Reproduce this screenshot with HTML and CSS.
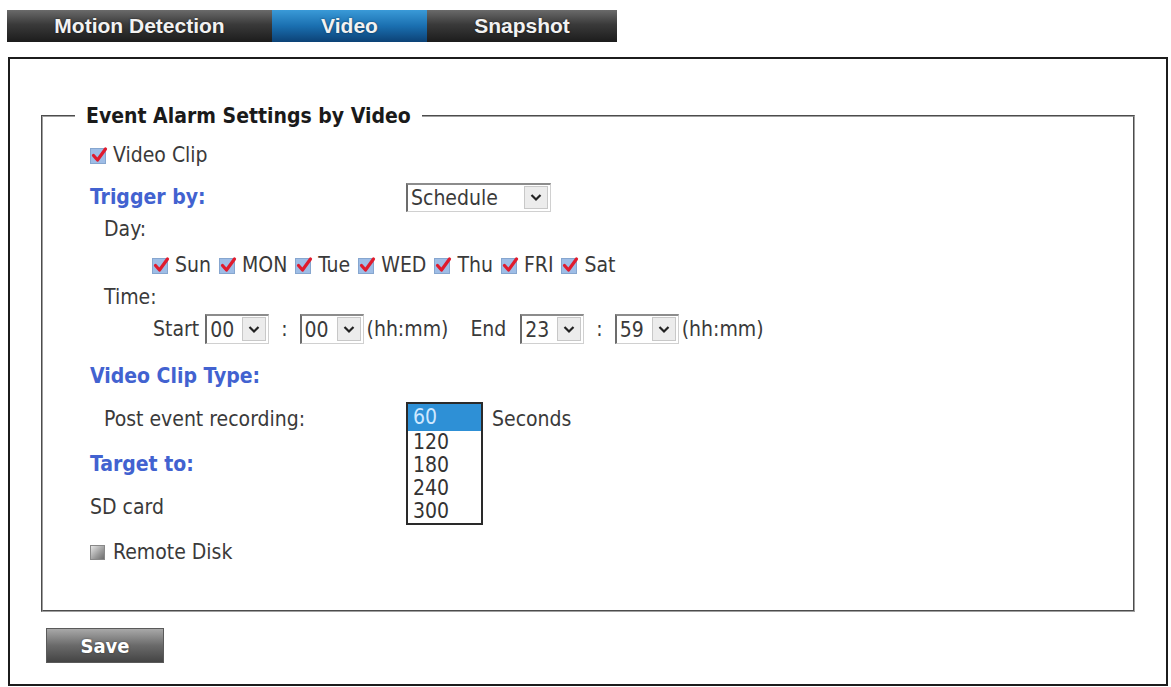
FILE: index.html
```html
<!DOCTYPE html>
<html>
<head>
    <meta charset="UTF-8">
    <title>Event Alarm Settings by Video</title>
    <link rel="stylesheet" href="styles.css">
</head>
<body>
    <nav class="tabs">
        <a href="#motion" class="tab">Motion Detection</a>
        <a href="#video" class="tab active">Video</a>
        <a href="#snapshot" class="tab">Snapshot</a>
    </nav>

    <div class="panel">
        <fieldset class="settings">
            <legend>Event Alarm Settings by Video</legend>
            <div class="rows">
                <div class="row">
                    <label class="check">
                        <svg class="cb" viewBox="0 0 18 18"><rect x="0.5" y="2.5" width="15" height="15" fill="#9ebde6" stroke="#86a6cf"/><path d="M3.5 9.5 L7.5 14 L15.5 3" fill="none" stroke="#e01b2d" stroke-width="3.2" stroke-linecap="round" stroke-linejoin="round"/></svg>
                        Video Clip
                    </label>
                </div>

                <div class="row gap-l">
                    <span class="label head">Trigger by:</span>
                    <div class="select wide">
                        <span class="value">Schedule</span>
                        <span class="btn"><svg viewBox="0 0 14 10"><path d="M2.5 3 L7 7.5 L11.5 3" fill="none" stroke="#222" stroke-width="2.2"/></svg></span>
                    </div>
                </div>

                <div class="row gap-xs sub">Day:</div>

                <div class="row gap-s days">
                    <label class="check"><svg class="cb" viewBox="0 0 18 18"><rect x="0.5" y="2.5" width="15" height="15" fill="#9ebde6" stroke="#86a6cf"/><path d="M3.5 9.5 L7.5 14 L15.5 3" fill="none" stroke="#e01b2d" stroke-width="3.2" stroke-linecap="round" stroke-linejoin="round"/></svg>Sun</label>
                    <label class="check"><svg class="cb" viewBox="0 0 18 18"><rect x="0.5" y="2.5" width="15" height="15" fill="#9ebde6" stroke="#86a6cf"/><path d="M3.5 9.5 L7.5 14 L15.5 3" fill="none" stroke="#e01b2d" stroke-width="3.2" stroke-linecap="round" stroke-linejoin="round"/></svg>MON</label>
                    <label class="check"><svg class="cb" viewBox="0 0 18 18"><rect x="0.5" y="2.5" width="15" height="15" fill="#9ebde6" stroke="#86a6cf"/><path d="M3.5 9.5 L7.5 14 L15.5 3" fill="none" stroke="#e01b2d" stroke-width="3.2" stroke-linecap="round" stroke-linejoin="round"/></svg>Tue</label>
                    <label class="check"><svg class="cb" viewBox="0 0 18 18"><rect x="0.5" y="2.5" width="15" height="15" fill="#9ebde6" stroke="#86a6cf"/><path d="M3.5 9.5 L7.5 14 L15.5 3" fill="none" stroke="#e01b2d" stroke-width="3.2" stroke-linecap="round" stroke-linejoin="round"/></svg>WED</label>
                    <label class="check"><svg class="cb" viewBox="0 0 18 18"><rect x="0.5" y="2.5" width="15" height="15" fill="#9ebde6" stroke="#86a6cf"/><path d="M3.5 9.5 L7.5 14 L15.5 3" fill="none" stroke="#e01b2d" stroke-width="3.2" stroke-linecap="round" stroke-linejoin="round"/></svg>Thu</label>
                    <label class="check"><svg class="cb" viewBox="0 0 18 18"><rect x="0.5" y="2.5" width="15" height="15" fill="#9ebde6" stroke="#86a6cf"/><path d="M3.5 9.5 L7.5 14 L15.5 3" fill="none" stroke="#e01b2d" stroke-width="3.2" stroke-linecap="round" stroke-linejoin="round"/></svg>FRI</label>
                    <label class="check"><svg class="cb" viewBox="0 0 18 18"><rect x="0.5" y="2.5" width="15" height="15" fill="#9ebde6" stroke="#86a6cf"/><path d="M3.5 9.5 L7.5 14 L15.5 3" fill="none" stroke="#e01b2d" stroke-width="3.2" stroke-linecap="round" stroke-linejoin="round"/></svg>Sat</label>
                </div>

                <div class="row gap-xs sub">Time:</div>

                <div class="row gap-xs times">
                    <span>Start</span>
                    <div class="select small first"><span class="value">00</span><span class="btn"><svg viewBox="0 0 14 10"><path d="M2.5 3 L7 7.5 L11.5 3" fill="none" stroke="#222" stroke-width="2.2"/></svg></span></div>
                    <span class="colon">:</span>
                    <div class="select small"><span class="value">00</span><span class="btn"><svg viewBox="0 0 14 10"><path d="M2.5 3 L7 7.5 L11.5 3" fill="none" stroke="#222" stroke-width="2.2"/></svg></span></div>
                    <span class="hint">(hh:mm)</span>
                    <span class="end">End</span>
                    <div class="select small first"><span class="value">23</span><span class="btn"><svg viewBox="0 0 14 10"><path d="M2.5 3 L7 7.5 L11.5 3" fill="none" stroke="#222" stroke-width="2.2"/></svg></span></div>
                    <span class="colon">:</span>
                    <div class="select small"><span class="value">59</span><span class="btn"><svg viewBox="0 0 14 10"><path d="M2.5 3 L7 7.5 L11.5 3" fill="none" stroke="#222" stroke-width="2.2"/></svg></span></div>
                    <span class="hint">(hh:mm)</span>
                </div>

                <div class="row gap-xl head">Video Clip Type:</div>

                <div class="row gap-m">
                    <span class="label sub">Post event recording:</span>
                    <div class="dropdown">
                        <!-- open list of the recording length select -->
                        <ul class="listbox">
                            <li class="selected">60</li>
                            <li>120</li>
                            <li>180</li>
                            <li>240</li>
                            <li>300</li>
                        </ul>
                    </div>
                    <span class="unit">Seconds</span>
                </div>

                <div class="row gap-l head">Target to:</div>

                <div class="row gap-m">SD card</div>

                <div class="row gap-l">
                    <label class="check"><span class="box"></span>Remote Disk</label>
                </div>
            </div>
        </fieldset>

        <button class="save">Save</button>
    </div>
</body>
</html>
```

FILE: styles.css
```css
* {
    margin: 0;
    padding: 0;
    box-sizing: border-box;
}

body {
    font-family: "DejaVu Sans Condensed", "DejaVu Sans", sans-serif;
    font-stretch: condensed;
    font-size: 21px;
    color: #3a3a3a;
    background: #fff;
}

/* top tab bar */
.tabs {
    display: flex;
    width: 610px;
    height: 32px;
    margin: 10px 0 0 7px;
    background: linear-gradient(#6a6a6a, #3a3a3a 45%, #1c1c1c);
}

.tab {
    display: flex;
    justify-content: center;
    align-items: center;
    color: #f2f2f2;
    text-decoration: none;
    font-family: "Liberation Sans", Arial, sans-serif;
    font-stretch: normal;
    font-weight: bold;
    font-size: 21px;
    text-shadow: 0 0 2px rgba(0, 0, 0, 0.6);
}

.tab:nth-child(1) { width: 265px; }
.tab:nth-child(2) { width: 155px; }
.tab:nth-child(3) { width: 190px; }

.tab.active {
    background: linear-gradient(#3a9ad8, #1a6fb0 50%, #0c4276);
}

/* page frame */
.panel {
    width: 1160px;
    height: 629px;
    margin: 15px 0 0 8px;
    border: 2px solid #1c1c1c;
    padding: 45px 31px 0 31px;
}

.settings {
    border: 2px groove #a0a0a0;
    padding: 13px 0 44px 0;
}

.settings legend {
    margin-left: 32px;
    padding: 0 11px;
    font-weight: bold;
    color: #1a1a1a;
    line-height: 24px;
}

.rows {
    display: flex;
    flex-direction: column;
    padding-left: 47px;
}

.row {
    display: flex;
    align-items: center;
    height: 28px;
    white-space: nowrap;
}

.gap-xs { margin-top: 4px; }
.gap-s { margin-top: 8px; }
.gap-m { margin-top: 15px; }
.gap-l { margin-top: 14px; }
.gap-xl { margin-top: 19px; }
.row.gap-l.head { margin-top: 17px; }
.row.gap-l:last-child { margin-top: 17px; }

.head {
    color: #4262d0;
    font-weight: bold;
}

.sub {
    padding-left: 14px;
}

.label {
    width: 316px;
    flex-shrink: 0;
}

/* checkboxes */
.check {
    display: flex;
    align-items: center;
}

.cb {
    width: 18px;
    height: 18px;
    margin-right: 5px;
}

.box {
    width: 15px;
    height: 15px;
    margin-right: 8px;
    border: 1px solid #888;
    background: linear-gradient(135deg, #e6e6e6, #9a9a9a 60%, #6e6e6e);
}

.days {
    padding-left: 62px;
    gap: 8px;
}

/* closed select boxes */
.select {
    display: flex;
    align-items: stretch;
    height: 30px;
    border-top: 2px solid #8c8c8c;
    border-left: 2px solid #6c6c6c;
    border-right: 1px solid #d0d0d0;
    border-bottom: 1px solid #d0d0d0;
    background: #fff;
}

.select .value {
    flex: 1;
    display: flex;
    align-items: center;
    padding-left: 3px;
}

.select .btn {
    display: flex;
    justify-content: center;
    align-items: center;
    width: 24px;
    margin: 1px 2px 2px 0;
    background: #ececec;
    border: 1px solid #c8c8c8;
}

.select .btn svg {
    width: 14px;
    height: 10px;
}

.select.wide {
    width: 145px;
    height: 29px;
}

.select.small {
    width: 64px;
}

.times {
    padding-left: 63px;
}

.times .first {
    margin-left: 6px;
}

.colon {
    margin: 0 12px;
}

.hint {
    margin-left: 3px;
}

.end {
    margin-left: 22px;
    margin-right: 8px;
}

/* open recording length list */
.dropdown {
    position: relative;
    width: 77px;
    height: 28px;
}

.listbox {
    position: absolute;
    top: -3px;
    left: 0;
    width: 77px;
    list-style: none;
    border: 2px solid #2a2a2a;
    background: #fff;
    z-index: 2;
}

.listbox li {
    height: 23px;
    line-height: 23px;
    padding-left: 5px;
    color: #333;
}

.listbox li.selected {
    height: 27px;
    line-height: 27px;
    background: #2e90d6;
    color: #cfe8ff;
}

.unit {
    margin-left: 9px;
}

/* save button */
.save {
    display: block;
    width: 118px;
    height: 35px;
    margin: 16px 0 0 5px;
    border: 1px solid #5a5a5a;
    background: linear-gradient(#a8a8a8, #6a6a6a 50%, #444);
    color: #fff;
    font-family: "DejaVu Sans Condensed", "DejaVu Sans", sans-serif;
    font-stretch: condensed;
    font-weight: bold;
    font-size: 20px;
    text-shadow: 0 0 2px rgba(0, 0, 0, 0.5);
}
```
